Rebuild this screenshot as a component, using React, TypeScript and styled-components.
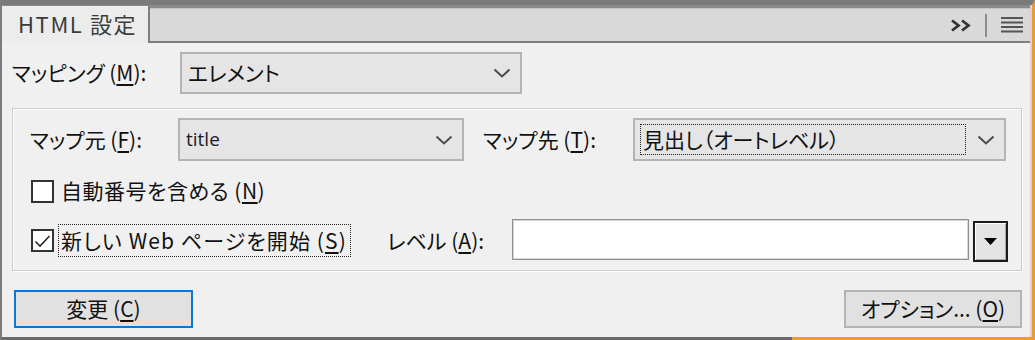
import React from 'react';
import styled, { createGlobalStyle } from 'styled-components';

const Global = createGlobalStyle`
  html, body { margin: 0; padding: 0; background: #f0f0f0; }
  body {
    font-family: "Noto Sans CJK JP", "Noto Sans", sans-serif;
    font-feature-settings: "palt";
    -webkit-font-smoothing: antialiased;
  }
`;

const Frame = styled.div`
  width: 1035px;
  height: 340px;
  box-sizing: border-box;
  display: flex;
  flex-direction: column;
  border-top: 5px solid #7a7a7a;
  border-left: 2px solid #7c7c7c;
  border-right: 3px solid #e99b3a;
  padding-bottom: 3px;
  background: linear-gradient(to right, #6a6a6a 0 790px, #e99b3a 790px);
`;

const Panel = styled.div`
  flex: 1;
  display: flex;
  flex-direction: column;
  background: #f0f0f0;
  border-right: 2px solid #d4d4d4;
`;

const Header = styled.div`
  display: flex;
  height: 38px;
  background: #8a8a8a;
`;

const Tab = styled.div`
  width: 148px;
  box-sizing: border-box;
  margin-top: 1px;
  padding: 0 0 4px 16px;
  background: #ececec;
  border-right: 2px solid #7e7e7e;
  display: flex;
  align-items: center;
  font-size: 22px;
  letter-spacing: 1.6px;
  color: #3c3c3c;
  font-feature-settings: normal;
  white-space: nowrap;
`;

const Strip = styled.div`
  flex: 1;
  margin-top: 3px;
  background: #d9d9d9;
  border-top: 1px solid #c4c4c4;
  border-bottom: 2px solid #7e7e7e;
  display: flex;
  justify-content: flex-end;
  align-items: center;
  gap: 14px;
  padding: 0 7px 0 0;
`;

const Divider = styled.div`
  width: 2px;
  height: 23px;
  background: #8c8c8c;
`;

const Body = styled.div`
  flex: 1;
  display: flex;
  flex-direction: column;
  padding: 9px 8px 0 10px;
`;

const Row = styled.div<{ $h: number; $mt?: number }>`
  display: flex;
  align-items: center;
  height: ${(p) => p.$h}px;
  margin-top: ${(p) => p.$mt ?? 0}px;
`;

const Label = styled.div<{ $w?: number; $ml?: number }>`
  width: ${(p) => (p.$w ? `${p.$w}px` : 'auto')};
  margin-left: ${(p) => (p.$ml !== undefined ? `${p.$ml}px` : '0')};
  flex-shrink: 0;
  font-size: 21px;
  line-height: 1.2;
  color: #111;
  white-space: nowrap;
`;

const AutoLabel = styled(Label)`
  margin-left: auto;
`;

const Key = styled.u`
  text-underline-offset: 3px;
  text-decoration-thickness: 1.5px;
`;

const Select = styled.div<{ $w: number }>`
  width: ${(p) => p.$w}px;
  height: 100%;
  box-sizing: border-box;
  flex-shrink: 0;
  display: flex;
  align-items: center;
  background: #e5e5e5;
  border: 2px solid #b4b4b4;
  padding: 0 9px 0 6px;
  font-size: 21px;
  color: #111;
`;

const SelectText = styled.div`
  flex: 1;
  line-height: 1.2;
  white-space: nowrap;
`;

const LatinText = styled(SelectText)`
  font-family: "Open Sans", "Noto Sans", sans-serif;
  font-size: 19px;
  color: #1a1a2a;
`;

const FocusText = styled.div`
  flex: 1;
  align-self: stretch;
  margin: 4px 11px 4px -1px;
  border: 1px dotted #222;
  display: flex;
  align-items: center;
  padding-left: 2px;
  line-height: 1.2;
  white-space: nowrap;
`;

const Group = styled.div`
  margin-top: 14px;
  height: 163px;
  box-sizing: border-box;
  border: 1px solid #cbcbcb;
  box-shadow: inset 1px 1px 0 #fff, 1px 1px 0 #fff;
  padding: 9px 13px 8px 17px;
  display: flex;
  flex-direction: column;
`;

const CheckBox = styled.div`
  width: 23px;
  height: 23px;
  box-sizing: border-box;
  margin-left: 1px;
  flex-shrink: 0;
  border: 2px solid #333;
  background: #fff;
  display: flex;
  align-items: center;
  justify-content: center;
`;

const CheckText = styled.div<{ $focus?: boolean }>`
  margin-left: ${(p) => (p.$focus ? 4 : 7)}px;
  padding: ${(p) => (p.$focus ? '3px 3px 3px 2px' : '0')};
  border: ${(p) => (p.$focus ? '1px dotted #222' : 'none')};
  font-size: 21px;
  line-height: 1.2;
  letter-spacing: ${(p) => (p.$focus ? 1.1 : 0.5)}px;
  color: #111;
  white-space: nowrap;
`;

const TextInput = styled.div`
  width: 457px;
  height: 41px;
  box-sizing: border-box;
  background: #fff;
  border: 1px solid #8f8f8f;
  box-shadow: inset 0 0 0 1px #d6d6d6;
  align-self: flex-start;
`;

const DropButton = styled.div`
  width: 35px;
  height: 41px;
  box-sizing: border-box;
  margin-left: 4px;
  align-self: flex-end;
  border: 2px solid #1c1c1c;
  background: #e4e4e4;
  box-shadow: inset 1px 1px 0 #fff, inset -1px -1px 0 #a8a8a8;
  display: flex;
  align-items: center;
  justify-content: center;
`;

const ButtonRow = styled.div`
  margin-top: 19px;
  display: flex;
  justify-content: space-between;
  padding-left: 2px;
`;

const Button = styled.div<{ $primary?: boolean }>`
  width: ${(p) => (p.$primary ? 179 : 178)}px;
  height: 38px;
  box-sizing: border-box;
  display: flex;
  align-items: center;
  justify-content: center;
  background: #e1e1e1;
  border: 2px solid ${(p) => (p.$primary ? '#0a78d7' : '#b4b4b4')};
  font-size: 21px;
  line-height: 1.2;
  color: #111;
  white-space: nowrap;
`;

const Chevron = () => (
  <svg width="18" height="10" viewBox="0 0 18 10">
    <polyline points="1.5,1.5 9,8.5 16.5,1.5" fill="none" stroke="#4a4a4a" strokeWidth="2" />
  </svg>
);

const DoubleChevron = () => (
  <svg width="21" height="13" viewBox="0 0 21 13">
    <polyline points="2,1.5 8.5,6.5 2,11.5" fill="none" stroke="#333" strokeWidth="2.8" />
    <polyline points="12,1.5 18.5,6.5 12,11.5" fill="none" stroke="#333" strokeWidth="2.8" />
  </svg>
);

const MenuIcon = () => (
  <svg width="22" height="16" viewBox="0 0 22 16">
    {[1, 5.5, 10, 14.5].map((y) => (
      <rect key={y} x="0" y={y - 1} width="22" height="2" fill="#555" />
    ))}
  </svg>
);

const CheckMark = () => (
  <svg width="17" height="14" viewBox="0 0 17 14">
    <polyline points="1.5,7.5 6,12 15.5,2" fill="none" stroke="#2a2a2a" strokeWidth="1.6" />
  </svg>
);

const Triangle = () => (
  <svg width="13" height="7" viewBox="0 0 13 7">
    <polygon points="0,0 13,0 6.5,7" fill="#000" />
  </svg>
);

export default function App() {
  return (
    <>
      <Global />
      <Frame>
        <Panel>
          <Header>
            <Tab>HTML 設定</Tab>
            <Strip>
              <DoubleChevron />
              <Divider />
              <MenuIcon />
            </Strip>
          </Header>
          <Body>
            <Row $h={42}>
              <Label $w={168}>
                マッピング (<Key>M</Key>):
              </Label>
              <Select $w={342}>
                <SelectText>エレメント</SelectText>
                <Chevron />
              </Select>
            </Row>

            <Group>
              <Row $h={43}>
                <Label $w={148}>
                  マップ元 (<Key>F</Key>):
                </Label>
                <Select $w={286}>
                  <LatinText>title</LatinText>
                  <Chevron />
                </Select>
                <Label $w={150} $ml={19}>
                  マップ先 (<Key>T</Key>):
                </Label>
                <Select $w={373}>
                  <FocusText>見出し（オートレベル）</FocusText>
                  <Chevron />
                </Select>
              </Row>
              <Row $h={30} $mt={15}>
                <CheckBox />
                <CheckText>
                  自動番号を含める (<Key>N</Key>)
                </CheckText>
              </Row>
              <Row $h={43} $mt={13}>
                <CheckBox>
                  <CheckMark />
                </CheckBox>
                <CheckText $focus>
                  新しい Web ページを開始 (<Key>S</Key>)
                </CheckText>
                <AutoLabel $w={125}>
                  レベル (<Key>A</Key>):
                </AutoLabel>
                <TextInput />
                <DropButton>
                  <Triangle />
                </DropButton>
              </Row>
            </Group>

            <ButtonRow>
              <Button $primary>
                変更 (<Key>C</Key>)
              </Button>
              <Button>
                オプション... (<Key>O</Key>)
              </Button>
            </ButtonRow>
          </Body>
        </Panel>
      </Frame>
    </>
  );
}
